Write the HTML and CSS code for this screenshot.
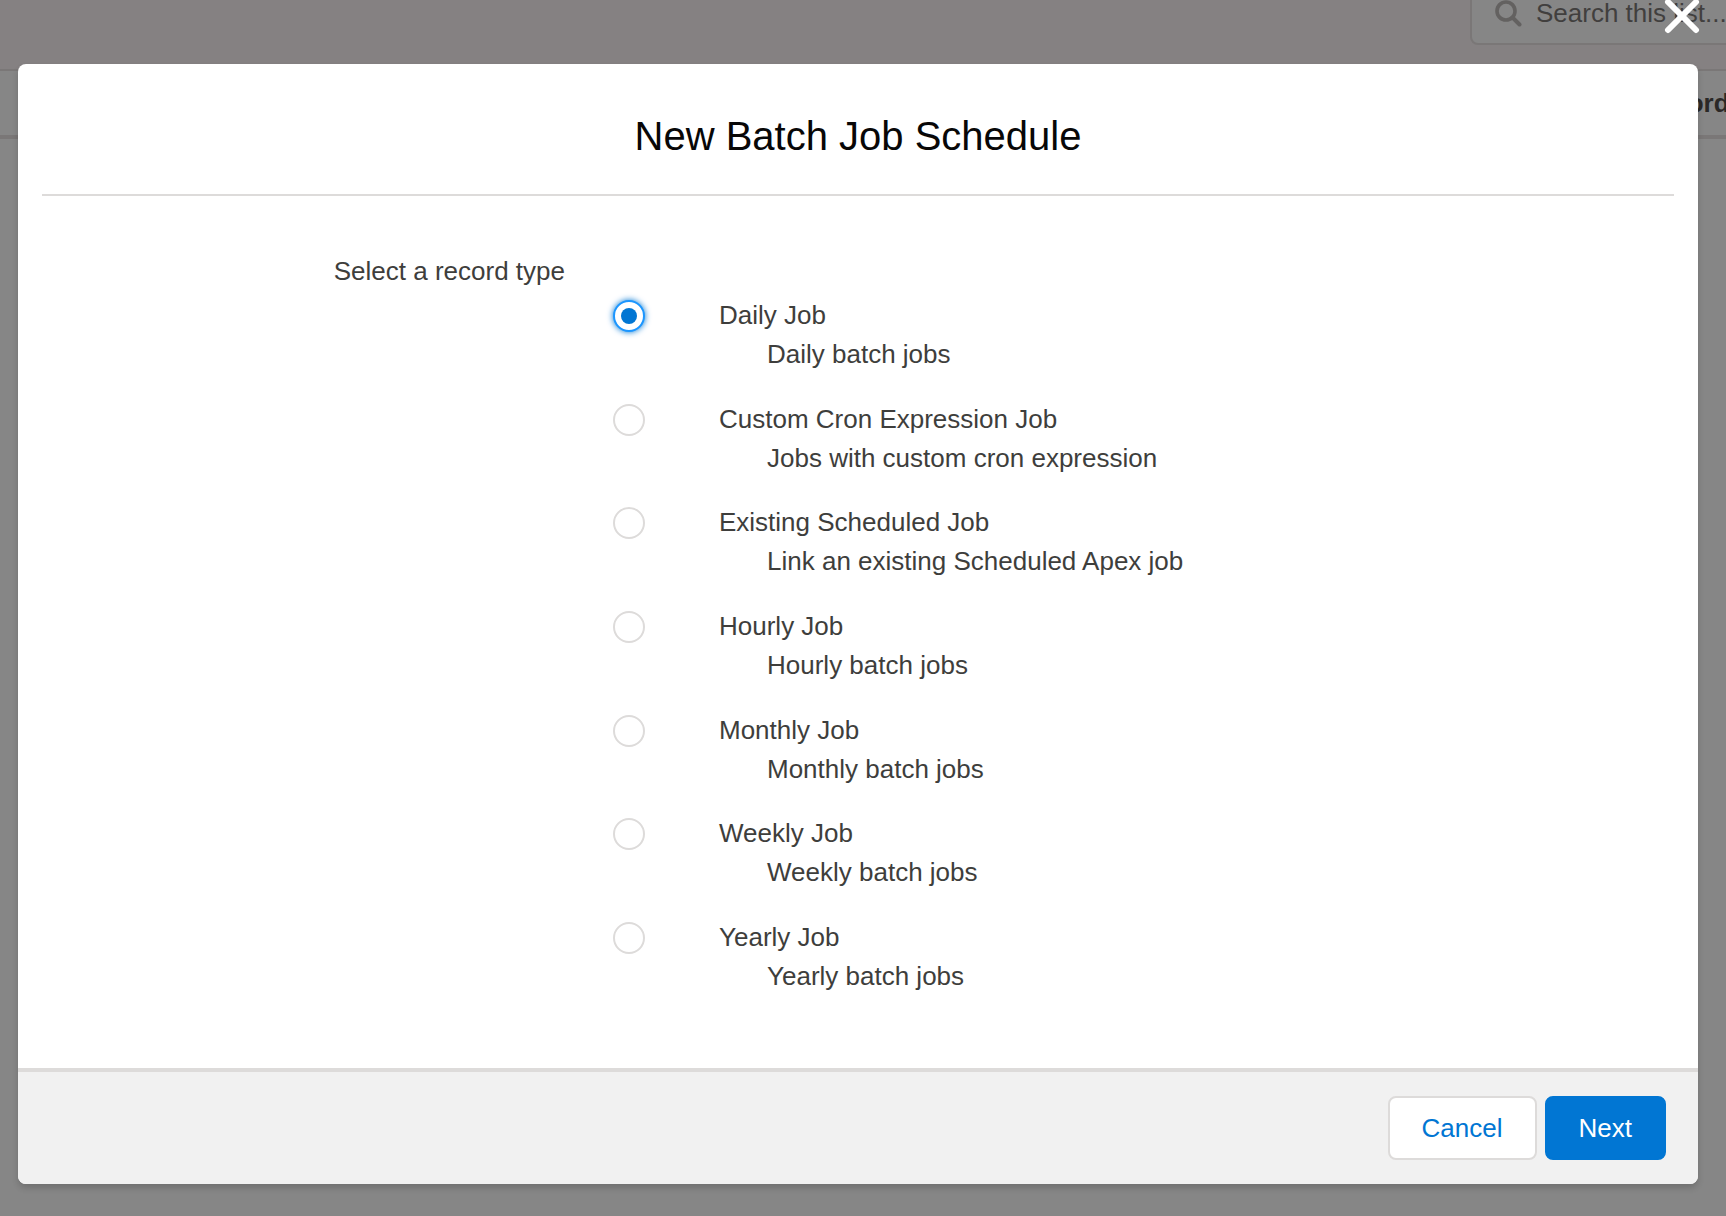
FILE: index.html
```html
<!DOCTYPE html>
<html lang="en">
<head>
<meta charset="utf-8">
<meta name="viewport" content="width=device-width, initial-scale=1">
<title>New Batch Job Schedule</title>
<link rel="stylesheet" href="styles.css">
</head>
<body>
<div class="page" aria-hidden="true">
  <div class="toolbar">
    <label class="search">
      <svg class="search-icon" viewBox="0 0 28 28" width="28" height="28"><circle cx="12" cy="12" r="9" fill="none" stroke="currentColor" stroke-width="3.6"/><path d="M18.5 18.5 L25.5 25.5" stroke="currentColor" stroke-width="4" stroke-linecap="round"/></svg>
      <input class="search-input" type="search" placeholder="Search this list..." tabindex="-1" aria-label="Search this list">
    </label>
  </div>
  <table class="list">
    <thead><tr><th scope="col">Record</th></tr></thead>
  </table>
</div>

<div class="overlay">
  <button class="close" type="button" aria-label="Close"><svg viewBox="0 0 36 36" width="36" height="36"><path d="M4 4 L32 32 M32 4 L4 32" stroke="currentColor" stroke-width="6" stroke-linecap="round"/></svg></button>
  <form class="modal" role="dialog" aria-labelledby="title">
    <header class="modal-header">
      <h1 id="title">New Batch Job Schedule</h1>
    </header>
    <div class="modal-body" role="radiogroup" aria-labelledby="group-label">
      <div class="group-label" id="group-label">Select a record type</div>
      <div class="options">
        <label class="option"><input type="radio" name="type" checked><span class="name">Daily Job<span class="desc">Daily batch jobs</span></span></label>
        <label class="option"><input type="radio" name="type"><span class="name">Custom Cron Expression Job<span class="desc">Jobs with custom cron expression</span></span></label>
        <label class="option"><input type="radio" name="type"><span class="name">Existing Scheduled Job<span class="desc">Link an existing Scheduled Apex job</span></span></label>
        <label class="option"><input type="radio" name="type"><span class="name">Hourly Job<span class="desc">Hourly batch jobs</span></span></label>
        <label class="option"><input type="radio" name="type"><span class="name">Monthly Job<span class="desc">Monthly batch jobs</span></span></label>
        <label class="option"><input type="radio" name="type"><span class="name">Weekly Job<span class="desc">Weekly batch jobs</span></span></label>
        <label class="option"><input type="radio" name="type"><span class="name">Yearly Job<span class="desc">Yearly batch jobs</span></span></label>
      </div>
    </div>
    <footer class="modal-footer">
      <button class="button" type="button">Cancel</button>
      <button class="button brand" type="button">Next</button>
    </footer>
  </form>
</div>
</body>
</html>
```

FILE: styles.css
```css
*,
*::before {
  box-sizing: border-box;
}

body {
  margin: 0;
  position: relative;
  min-height: 100vh;
  overflow-x: hidden;
  background: #868686;
  color: #3e3e3c;
  font: 26px/39px "Liberation Sans", Arial, sans-serif;
}

/* List view dimmed behind the dialog */
.page {
  position: absolute;
  inset: 0;
  overflow: hidden;
}

.toolbar {
  display: flex;
  justify-content: flex-end;
  align-items: flex-start;
  height: 69px;
  background: #858182;
}

.search {
  display: flex;
  align-items: center;
  flex: none;
  gap: 14px;
  width: 280px;
  height: 64px;
  margin-top: -19px;
  margin-right: -24px;
  padding-left: 22px;
  border: 2px solid #7a7777;
  border-radius: 8px;
  background: #868686;
}

.search-icon {
  flex: none;
  color: #636160;
}

.search-input {
  flex: 1;
  min-width: 0;
  padding: 0;
  border: 0;
  background: none;
  font: inherit;
}

.search-input::placeholder {
  color: #413f3e;
  opacity: 1;
}

.list {
  width: 100%;
  border-collapse: separate;
  border-spacing: 0;
}

.list th {
  height: 70px;
  padding: 0 0 0 calc(100% - 86px);
  border-top: 2px solid #7a7777;
  border-bottom: 4px solid #7a7777;
  color: #2a2827;
  font-weight: 700;
  line-height: 39px;
  text-align: left;
  white-space: nowrap;
}

/* Dialog */
.overlay {
  position: relative;
  display: flex;
  min-height: 100vh;
  padding: 64px 28px 32px 18px;
}

.close {
  position: absolute;
  top: -2px;
  right: 26px;
  width: 36px;
  height: 36px;
  padding: 0;
  border: 0;
  background: none;
  color: #fff;
}

.close svg {
  display: block;
}

.modal {
  display: flex;
  flex: 1;
  flex-direction: column;
  overflow: hidden;
  border-radius: 8px;
  background: #fff;
  box-shadow: 0 4px 6px rgba(0, 0, 0, 0.16);
}

.modal-header {
  margin: 0 24px;
  padding: 48px 0 34px;
  border-bottom: 2px solid #dddbda;
  text-align: center;
}

.modal-header h1 {
  margin: 0;
  color: #080707;
  font-size: 40px;
  font-weight: 400;
  line-height: 48px;
}

.modal-body {
  display: grid;
  flex: 1;
  grid-template-columns: 1fr 2fr;
  padding: 56px 24px 72px;
}

.group-label {
  padding-right: 21px;
  text-align: right;
}

.options {
  display: flex;
  flex-direction: column;
  justify-content: space-between;
  padding: 44px 0 0 27px;
}

.option {
  display: flex;
  align-items: flex-start;
  gap: 74px;
}

.option input {
  display: grid;
  flex: none;
  place-items: center;
  width: 32px;
  height: 32px;
  margin: 4px 0 0;
  border: 2px solid #dddbda;
  border-radius: 50%;
  background: #fff;
  appearance: none;
}

.option input:checked {
  border-color: #1b96ff;
  box-shadow: 0 0 6px #0176d3;
}

.option input:checked::before {
  width: 16px;
  height: 16px;
  border-radius: 50%;
  background: #0176d3;
  content: "";
}

.desc {
  display: block;
  padding-left: 48px;
}

.modal-footer {
  display: flex;
  justify-content: flex-end;
  gap: 8px;
  padding: 24px 32px;
  border-top: 4px solid #dddbda;
  background: #f1f1f1;
}

.button {
  height: 64px;
  padding: 0 32px;
  border: 2px solid #dddbda;
  border-radius: 8px;
  background: #fff;
  color: #0176d3;
  font: inherit;
}

.button.brand {
  border-color: #0176d3;
  background: #0176d3;
  color: #fff;
}
```
